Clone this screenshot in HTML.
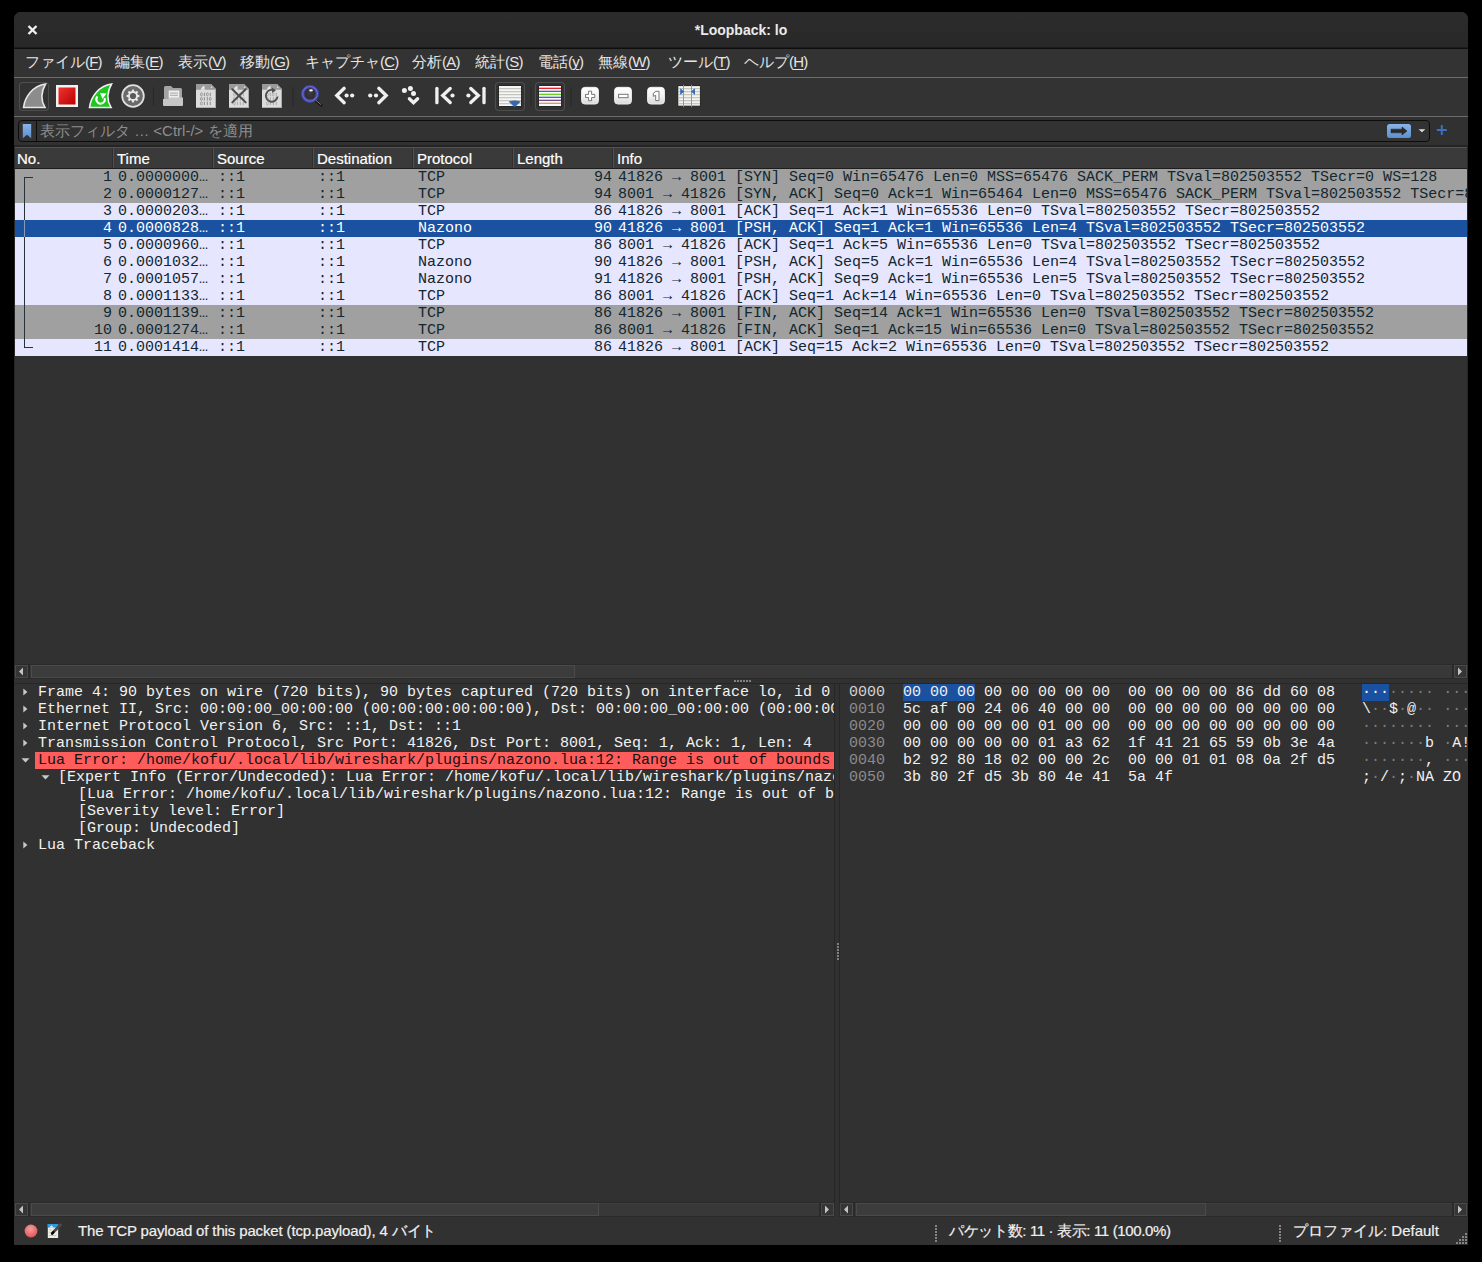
<!DOCTYPE html><html lang="ja"><head><meta charset="utf-8"><style>
*{box-sizing:border-box;margin:0;padding:0}
html,body{width:1482px;height:1262px;overflow:hidden;background:#000}
body{position:relative;font-family:"Liberation Sans",sans-serif;color:#eee}
.a{position:absolute}
.mono{font-family:"Liberation Mono",monospace;font-size:15px;white-space:pre}
.sans{font-family:"Liberation Sans",sans-serif;white-space:nowrap}
.stk{-webkit-text-stroke:0.2px currentColor}
#win{position:absolute;left:14px;top:12px;width:1454px;height:1233px;background:#313131;border-radius:7px 7px 0 0;overflow:hidden}
u{text-decoration:underline;text-underline-offset:2px;text-decoration-thickness:1px}
.row{position:absolute;left:15px;width:1452px;height:17px;line-height:17px;color:#12272e;overflow:hidden}
.row span{position:absolute;top:0}
.g{background:#a0a0a0}.l{background:#e7e6ff}.s{background:#1a51a0;color:#fff}
.dl{position:absolute;height:17px;line-height:17px;color:#f2f2f2;white-space:pre;font-family:"Liberation Mono",monospace;font-size:15px}
.hx{position:absolute;height:17px;line-height:17px;white-space:pre;font-family:"Liberation Mono",monospace;font-size:15px;color:#f0f0f0}
</style></head><body>
<div id="win"></div>
<div class="a" style="left:14px;top:12px;width:1454px;height:36px;background:linear-gradient(#2c2c2c,#282828);border-radius:7px 7px 0 0"></div>
<div class="a" style="left:14px;top:47px;width:1454px;height:1px;background:#1c1c1c"></div>
<div class="a" style="left:14px;top:48px;width:1454px;height:1px;background:#0e0e0e"></div>
<svg class="a" style="left:0;top:0" width="1482" height="1262" viewBox="0 0 1482 1262"><path d="M28.5 26 L36.5 34 M36.5 26 L28.5 34" stroke="#f0f0f0" stroke-width="2.4" stroke-linecap="butt"/></svg>
<div class="a sans" style="left:14px;width:1454px;top:22px;text-align:center;font-weight:bold;font-size:14px;color:#eaeaea;line-height:17px">*Loopback: lo</div>
<div class="a" style="left:14px;top:49px;width:1454px;height:28px;background:#333333"></div>
<div class="a sans" style="left:25px;top:52px;font-size:15px;line-height:20px;color:#e6e6e6">ファイル<span style="letter-spacing:-0.8px">(<u>F</u>)</span></div>
<div class="a sans" style="left:115px;top:52px;font-size:15px;line-height:20px;color:#e6e6e6">編集<span style="letter-spacing:-0.8px">(<u>E</u>)</span></div>
<div class="a sans" style="left:178px;top:52px;font-size:15px;line-height:20px;color:#e6e6e6">表示<span style="letter-spacing:-0.8px">(<u>V</u>)</span></div>
<div class="a sans" style="left:240px;top:52px;font-size:15px;line-height:20px;color:#e6e6e6">移動<span style="letter-spacing:-0.8px">(<u>G</u>)</span></div>
<div class="a sans" style="left:305px;top:52px;font-size:15px;line-height:20px;color:#e6e6e6">キャプチャ<span style="letter-spacing:-0.8px">(<u>C</u>)</span></div>
<div class="a sans" style="left:412px;top:52px;font-size:15px;line-height:20px;color:#e6e6e6">分析<span style="letter-spacing:-0.8px">(<u>A</u>)</span></div>
<div class="a sans" style="left:475px;top:52px;font-size:15px;line-height:20px;color:#e6e6e6">統計<span style="letter-spacing:-0.8px">(<u>S</u>)</span></div>
<div class="a sans" style="left:538px;top:52px;font-size:15px;line-height:20px;color:#e6e6e6">電話<span style="letter-spacing:-0.8px">(<u>y</u>)</span></div>
<div class="a sans" style="left:598px;top:52px;font-size:15px;line-height:20px;color:#e6e6e6">無線<span style="letter-spacing:-0.8px">(<u>W</u>)</span></div>
<div class="a sans" style="left:668px;top:52px;font-size:15px;line-height:20px;color:#e6e6e6">ツール<span style="letter-spacing:-0.8px">(<u>T</u>)</span></div>
<div class="a sans" style="left:744px;top:52px;font-size:15px;line-height:20px;color:#e6e6e6">ヘルプ<span style="letter-spacing:-0.8px">(<u>H</u>)</span></div>
<div class="a" style="left:14px;top:77px;width:1454px;height:1px;background:#6c6c6c"></div>
<div class="a" style="left:14px;top:78px;width:1454px;height:38px;background:#333333"></div>
<div class="a" style="left:14px;top:116px;width:1454px;height:1px;background:#6c6c6c"></div>
<svg class="a" style="left:0;top:0" width="1482" height="130" viewBox="0 0 1482 130">
<defs>
<linearGradient id="rg" x1="0" y1="0" x2="1" y2="1"><stop offset="0" stop-color="#e33"/><stop offset="1" stop-color="#b00"/></linearGradient>
<linearGradient id="wg" x1="0" y1="0" x2="0" y2="1"><stop offset="0" stop-color="#fff"/><stop offset="0.5" stop-color="#f4f4f4"/><stop offset="1" stop-color="#d8d8d8"/></linearGradient>
<linearGradient id="bg" x1="0" y1="0" x2="0" y2="1"><stop offset="0" stop-color="#8ab4e6"/><stop offset="1" stop-color="#5a8fd0"/></linearGradient>
</defs>
<!-- button frames -->
<rect x="19.5" y="82.5" width="29" height="28" rx="3.5" fill="#323232" stroke="#4e4e4e" stroke-width="1.1"/>
<rect x="495.5" y="82.5" width="29" height="28" rx="3.5" fill="#323232" stroke="#4e4e4e" stroke-width="1.1"/>
<rect x="535.5" y="82.5" width="29" height="28" rx="3.5" fill="#323232" stroke="#4e4e4e" stroke-width="1.1"/>
<!-- fin gray -->
<path d="M23.5 107.5 C25 96 33 86 45.5 84 C41 92 40.5 100 45 107.5 Z" fill="#8c8c8c" stroke="#e6e6e6" stroke-width="1.6" stroke-linejoin="miter"/>
<!-- red stop -->
<rect x="56" y="85" width="22" height="22" fill="#f2f2f2"/>
<rect x="58.5" y="87.5" width="17" height="17" fill="url(#rg)"/>
<!-- green fin -->
<path d="M89.5 107.5 C91 96 99 86 111.5 84 C107 92 106.5 100 111 107.5 Z" fill="#1ec81e" stroke="#f0f0f0" stroke-width="1.6"/>
<path d="M97.5 96.5 A4.2 4.2 0 1 0 104.5 98" fill="none" stroke="#fff" stroke-width="2"/>
<path d="M100 93 L106.5 93.5 L102.5 99 Z" fill="#fff"/>
<!-- gear -->
<circle cx="133" cy="96" r="10.8" fill="#6a6a6a" stroke="#e0e0e0" stroke-width="1.8"/>
<g fill="#e8e8e8">
<circle cx="133" cy="96" r="5"/>
<rect x="131.9" y="89.6" width="2.2" height="12.8"/>
<rect x="126.6" y="94.9" width="12.8" height="2.2"/>
<rect x="131.9" y="89.6" width="2.2" height="12.8" transform="rotate(45 133 96)"/>
<rect x="131.9" y="89.6" width="2.2" height="12.8" transform="rotate(-45 133 96)"/>
</g>
<circle cx="133" cy="96" r="3.1" fill="#5a5a5a"/>
<!-- separators -->
<rect x="153" y="87" width="1" height="19" fill="#282828"/>
<rect x="292.5" y="87" width="1" height="19" fill="#282828"/>
<rect x="530.5" y="87" width="1" height="19" fill="#282828"/>
<rect x="570.5" y="87" width="1" height="19" fill="#282828"/>
<!-- folder -->
<path d="M164 106 L164 87.5 Q164 86 165.5 86 L171 86 L173 88 L180.5 88 Q182 88 182 89.5 L182 106 Z" fill="#a4a4a4"/>
<rect x="168.7" y="90.5" width="10.6" height="8" fill="#eeeeee"/>
<rect x="170" y="92.6" width="8" height="1" fill="#a8a8a8"/><rect x="170" y="94.8" width="8" height="1" fill="#a8a8a8"/>
<path d="M163 99 L168 99 L170 97.5 L183 97.5 L183 105 Q183 106 182 106 L164 106 Q163 106 163 105 Z" fill="#c6c6c6"/>
<!-- file icons -->
<g>
<path d="M196 84 L211 84 L216 89.2 L216 108 L196 108 Z" fill="#dcdcdc"/>
<path d="M196 84 L211 84 L216 89.2 L216 89.8 L196 89.8 Z" fill="#9a9a9a"/>
<path d="M200.8 89.8 Q201.5 86 204.8 86 Q204 87.5 204.8 89.8 Z" fill="#e6e6e6"/>
<circle cx="211.6" cy="87.3" r="0.8" fill="#e8e8e8"/>
<rect x="215" y="89.5" width="1" height="18.5" fill="#ababab"/>
<rect x="196" y="107" width="20" height="1" fill="#b0b0b0"/>
</g>
<ellipse cx="201.40" cy="94.40" rx="0.95" ry="1.55" fill="none" stroke="#8c8c8c" stroke-width="0.85"/><rect x="203.85" y="92.70" width="1" height="3.4" fill="#8c8c8c"/><ellipse cx="207.30" cy="94.40" rx="0.95" ry="1.55" fill="none" stroke="#8c8c8c" stroke-width="0.85"/><rect x="209.75" y="92.70" width="1" height="3.4" fill="#8c8c8c"/><ellipse cx="201.40" cy="98.90" rx="0.95" ry="1.55" fill="none" stroke="#8c8c8c" stroke-width="0.85"/><rect x="203.85" y="97.20" width="1" height="3.4" fill="#8c8c8c"/><rect x="206.80" y="97.20" width="1" height="3.4" fill="#8c8c8c"/><ellipse cx="210.25" cy="98.90" rx="0.95" ry="1.55" fill="none" stroke="#8c8c8c" stroke-width="0.85"/><ellipse cx="201.40" cy="103.40" rx="0.95" ry="1.55" fill="none" stroke="#8c8c8c" stroke-width="0.85"/><rect x="203.85" y="101.70" width="1" height="3.4" fill="#8c8c8c"/><rect x="206.80" y="101.70" width="1" height="3.4" fill="#8c8c8c"/><rect x="209.75" y="101.70" width="1" height="3.4" fill="#8c8c8c"/>
<g transform="translate(33 0)">
<path d="M196 84 L211 84 L216 89.2 L216 108 L196 108 Z" fill="#dcdcdc"/>
<path d="M196 84 L211 84 L216 89.2 L216 89.8 L196 89.8 Z" fill="#9a9a9a"/>
<path d="M200.8 89.8 Q201.5 86 204.8 86 Q204 87.5 204.8 89.8 Z" fill="#e6e6e6"/>
<circle cx="211.6" cy="87.3" r="0.8" fill="#e8e8e8"/>
<rect x="215" y="89.5" width="1" height="18.5" fill="#ababab"/>
<rect x="196" y="107" width="20" height="1" fill="#b0b0b0"/>
</g>
<ellipse cx="234.40" cy="94.40" rx="0.95" ry="1.55" fill="none" stroke="#a8a8a8" stroke-width="0.85"/><rect x="236.85" y="92.70" width="1" height="3.4" fill="#a8a8a8"/><ellipse cx="240.30" cy="94.40" rx="0.95" ry="1.55" fill="none" stroke="#a8a8a8" stroke-width="0.85"/><rect x="242.75" y="92.70" width="1" height="3.4" fill="#a8a8a8"/><ellipse cx="234.40" cy="98.90" rx="0.95" ry="1.55" fill="none" stroke="#a8a8a8" stroke-width="0.85"/><rect x="236.85" y="97.20" width="1" height="3.4" fill="#a8a8a8"/><rect x="239.80" y="97.20" width="1" height="3.4" fill="#a8a8a8"/><ellipse cx="243.25" cy="98.90" rx="0.95" ry="1.55" fill="none" stroke="#a8a8a8" stroke-width="0.85"/><ellipse cx="234.40" cy="103.40" rx="0.95" ry="1.55" fill="none" stroke="#a8a8a8" stroke-width="0.85"/><rect x="236.85" y="101.70" width="1" height="3.4" fill="#a8a8a8"/><rect x="239.80" y="101.70" width="1" height="3.4" fill="#a8a8a8"/><rect x="242.75" y="101.70" width="1" height="3.4" fill="#a8a8a8"/>
<path d="M232.3 89.3 L245.7 102.4 M245.7 89.3 L232.3 102.4" stroke="#4a4a4a" stroke-width="2" stroke-linecap="round"/>
<g transform="translate(66 0)">
<path d="M196 84 L211 84 L216 89.2 L216 108 L196 108 Z" fill="#dcdcdc"/>
<path d="M196 84 L211 84 L216 89.2 L216 89.8 L196 89.8 Z" fill="#9a9a9a"/>
<path d="M200.8 89.8 Q201.5 86 204.8 86 Q204 87.5 204.8 89.8 Z" fill="#e6e6e6"/>
<circle cx="211.6" cy="87.3" r="0.8" fill="#e8e8e8"/>
<rect x="215" y="89.5" width="1" height="18.5" fill="#ababab"/>
<rect x="196" y="107" width="20" height="1" fill="#b0b0b0"/>
</g>
<ellipse cx="267.40" cy="94.40" rx="0.95" ry="1.55" fill="none" stroke="#a8a8a8" stroke-width="0.85"/><rect x="269.85" y="92.70" width="1" height="3.4" fill="#a8a8a8"/><ellipse cx="273.30" cy="94.40" rx="0.95" ry="1.55" fill="none" stroke="#a8a8a8" stroke-width="0.85"/><rect x="275.75" y="92.70" width="1" height="3.4" fill="#a8a8a8"/><ellipse cx="267.40" cy="98.90" rx="0.95" ry="1.55" fill="none" stroke="#a8a8a8" stroke-width="0.85"/><rect x="269.85" y="97.20" width="1" height="3.4" fill="#a8a8a8"/><rect x="272.80" y="97.20" width="1" height="3.4" fill="#a8a8a8"/><ellipse cx="276.25" cy="98.90" rx="0.95" ry="1.55" fill="none" stroke="#a8a8a8" stroke-width="0.85"/><ellipse cx="267.40" cy="103.40" rx="0.95" ry="1.55" fill="none" stroke="#a8a8a8" stroke-width="0.85"/><rect x="269.85" y="101.70" width="1" height="3.4" fill="#a8a8a8"/><rect x="272.80" y="101.70" width="1" height="3.4" fill="#a8a8a8"/><rect x="275.75" y="101.70" width="1" height="3.4" fill="#a8a8a8"/>
<path d="M274.6 90.6 A5.9 5.9 0 1 0 277.6 96.5" fill="none" stroke="#505050" stroke-width="1.9"/>
<path d="M271.8 87.6 L276 90.3 L272.2 93 Z" fill="#505050"/>
<!-- magnifier -->
<defs><radialGradient id="glass" cx="0.5" cy="0.45" r="0.6"><stop offset="0" stop-color="#3c3c3c"/><stop offset="0.7" stop-color="#2e2e2e"/><stop offset="1" stop-color="#4a4a4a"/></radialGradient></defs>
<path d="M315.6 100.2 L321.2 105.3" stroke="#161616" stroke-width="2.8" stroke-linecap="round"/>
<path d="M316.3 100.6 L320.8 104.4" stroke="#9a9888" stroke-width="0.9" stroke-linecap="round"/>
<circle cx="310" cy="93.8" r="6.4" fill="url(#glass)"/>
<circle cx="310" cy="93.8" r="7.2" fill="none" stroke="#6a62d0" stroke-width="2.8"/>
<circle cx="310" cy="93.8" r="8.5" fill="none" stroke="#2c44a8" stroke-width="0.9"/>
<circle cx="310" cy="93.8" r="6.2" fill="none" stroke="#1a2a60" stroke-width="0.5"/>
<ellipse cx="311" cy="90.4" rx="1.9" ry="1.1" fill="#f4f4f4"/>
<!-- arrows -->
<g stroke="#f0f0ee" stroke-width="3.3" stroke-linecap="round" stroke-linejoin="miter" fill="none">
<path d="M344.2 88.3 L336.8 95.5 L344.2 102.7"/>
<path d="M378.8 88.3 L386.2 95.5 L378.8 102.7"/>
<path d="M409.4 98.7 L413.5 102.6 L417.6 98.7"/>
<path d="M436.9 88.3 L436.9 102.7"/>
<path d="M450.2 88.5 L442.7 95.5 L450.2 102.5"/>
<path d="M470.8 88.5 L478.3 95.5 L470.8 102.5"/>
<path d="M484 88.3 L484 102.7"/>
</g>
<g fill="#f0f0f0">
<circle cx="346.6" cy="95.5" r="2.1"/><circle cx="352.2" cy="95.5" r="2.1"/>
<circle cx="370.2" cy="95.5" r="2.1"/><circle cx="376" cy="95.5" r="2.1"/>
<circle cx="404.4" cy="90.6" r="2.5"/><circle cx="410.4" cy="88.4" r="2.5"/><circle cx="413.5" cy="93.6" r="2.5"/>
<circle cx="452.5" cy="95.5" r="2.1"/><circle cx="468.4" cy="95.5" r="2.1"/>
</g>
<!-- autoscroll -->
<rect x="498.5" y="85.5" width="23" height="21" fill="#1e1e1e"/>
<rect x="499" y="86" width="22" height="20" fill="#f6f6f6"/>
<g fill="#b4b4a8">
<rect x="499" y="88.3" width="22" height="0.9"/><rect x="499" y="91.3" width="22" height="0.9"/><rect x="499" y="94.3" width="22" height="0.9"/>
<rect x="499" y="97.3" width="22" height="0.9"/><rect x="499" y="100.3" width="22" height="0.9"/><rect x="499" y="103.3" width="22" height="0.9"/>
</g>
<path d="M509 101.6 Q514.7 100 520.4 101.6 L514.7 107 Z" fill="#3568b0" stroke="#3568b0" stroke-width="0.6" stroke-linejoin="round"/>
<!-- colorize -->
<rect x="538.5" y="85.5" width="23" height="21" fill="#1e1e1e"/>
<rect x="539" y="86" width="22" height="20" fill="#f8f6ff"/>
<rect x="539" y="87.7" width="22" height="1.3" fill="#e82020"/>
<rect x="539" y="90.7" width="22" height="1.3" fill="#3a6ab8"/>
<rect x="539" y="93.7" width="22" height="1.3" fill="#6ad020"/>
<rect x="539" y="96.7" width="22" height="1.3" fill="#3a6ab8"/>
<rect x="539" y="99.7" width="22" height="1.3" fill="#7a4a90"/>
<rect x="539" y="102.7" width="22" height="1.3" fill="#d8a818"/>
<!-- zoom buttons -->
<rect x="581.5" y="87.3" width="17" height="16.8" rx="3.5" fill="url(#wg)" stroke="#fafafa" stroke-width="0.8"/>
<path d="M588.6 91.2 L591.6 91.2 L591.6 94.4 L594.8 94.4 L594.8 97.5 L591.6 97.5 L591.6 100.7 L588.6 100.7 L588.6 97.5 L585.5 97.5 L585.5 94.4 L588.6 94.4 Z" fill="#fff" stroke="#6a6a6a" stroke-width="0.9"/>
<rect x="614.5" y="87.3" width="17" height="16.8" rx="3.5" fill="url(#wg)" stroke="#fafafa" stroke-width="0.8"/>
<rect x="618.6" y="94.3" width="9.4" height="3.4" fill="#fff" stroke="#6a6a6a" stroke-width="0.9"/>
<rect x="647.5" y="87.3" width="17" height="16.8" rx="3.5" fill="url(#wg)" stroke="#fafafa" stroke-width="0.8"/>
<path d="M655.9 91.3 L659 91.3 L659 100.6 L655.7 100.6 L655.7 95.4 L653.3 96.3 L653.3 93.3 Z" fill="#fff" stroke="#6a6a6a" stroke-width="0.9" stroke-linejoin="round"/>
<!-- resize columns -->
<rect x="677.8" y="85.6" width="22.4" height="20.5" fill="#1e1e1e"/>
<rect x="678.3" y="86.1" width="21.6" height="19.6" fill="#f4f4f4"/>
<g fill="#b4b4a8">
<rect x="678.3" y="88.3" width="21.6" height="0.9"/><rect x="678.3" y="91.3" width="21.6" height="0.9"/><rect x="678.3" y="94.3" width="21.6" height="0.9"/>
<rect x="678.3" y="97.3" width="21.6" height="0.9"/><rect x="678.3" y="100.3" width="21.6" height="0.9"/><rect x="678.3" y="103.3" width="21.6" height="0.9"/>
</g>
<rect x="683.1" y="84.8" width="0.9" height="22.4" fill="#909090"/>
<rect x="691.1" y="84.8" width="0.9" height="22.4" fill="#909090"/>
<path d="M680.2 88.3 L684.2 91.6 L680.2 95 Z" fill="#3a6ab8"/>
<path d="M695 88.3 L691 91.6 L695 95 Z" fill="#3a6ab8"/>
</svg>

<div class="a" style="left:14px;top:117px;width:1454px;height:30px;background:#313131"></div>
<div class="a" style="left:18px;top:120px;width:1412px;height:22px;border:1.5px solid #0c0c0c;border-radius:4px;background:#323232"></div>
<div class="a" style="left:36px;top:121px;width:1px;height:20px;background:#0c0c0c"></div>
<div class="a sans" style="left:40px;top:121px;font-size:15px;line-height:20px;color:#8e8e8e">表示フィルタ … &lt;Ctrl-/&gt; を適用</div>
<svg class="a" style="left:0;top:110px" width="1482" height="40" viewBox="0 110 1482 40">
<defs><linearGradient id="bkg" x1="0" y1="0" x2="0" y2="1"><stop offset="0" stop-color="#8ab4e6"/><stop offset="1" stop-color="#5a90d0"/></linearGradient></defs>
<path d="M22.8 124 L31.2 124 L31.2 138.2 L27 134.8 L22.8 138.2 Z" fill="url(#bkg)"/>
<rect x="1387" y="124" width="24" height="14" rx="2.5" fill="url(#bkg)"/>
<path d="M1391 129.2 L1402 129.2 L1402 127 L1407 131 L1402 135 L1402 132.8 L1391 132.8 Z" fill="#2a2a2a" stroke="#2a2a2a" stroke-width="0.6" stroke-linejoin="round"/>
<path d="M1418.6 129.3 L1425.3 129.3 L1422 132.3 Z" fill="#e0e0e0"/>
<path d="M1441.8 125 L1441.8 135 M1436.8 130 L1446.8 130" stroke="#3a70c4" stroke-width="2"/>
</svg>

<div class="a" style="left:14px;top:145px;width:1454px;height:2px;background:#242424"></div>
<div class="a" style="left:14px;top:147px;width:1454px;height:518px;background:#313131;border-left:1px solid #262626;border-right:1px solid #262626;border-bottom:1px solid #262626"></div>
<div class="a" style="left:15px;top:147px;width:1452px;height:22px;background:#3a3a3a;border-top:1px solid #525252;border-bottom:1px solid #1e1e1e"></div>
<div class="a" style="left:112px;top:148px;width:1px;height:20px;background:#2e2e2e"></div><div class="a" style="left:113px;top:148px;width:1px;height:20px;background:#505050"></div>
<div class="a" style="left:212px;top:148px;width:1px;height:20px;background:#2e2e2e"></div><div class="a" style="left:213px;top:148px;width:1px;height:20px;background:#505050"></div>
<div class="a" style="left:312px;top:148px;width:1px;height:20px;background:#2e2e2e"></div><div class="a" style="left:313px;top:148px;width:1px;height:20px;background:#505050"></div>
<div class="a" style="left:412px;top:148px;width:1px;height:20px;background:#2e2e2e"></div><div class="a" style="left:413px;top:148px;width:1px;height:20px;background:#505050"></div>
<div class="a" style="left:512px;top:148px;width:1px;height:20px;background:#2e2e2e"></div><div class="a" style="left:513px;top:148px;width:1px;height:20px;background:#505050"></div>
<div class="a" style="left:612px;top:148px;width:1px;height:20px;background:#2e2e2e"></div><div class="a" style="left:613px;top:148px;width:1px;height:20px;background:#505050"></div>
<div class="a sans stk" style="left:17px;top:150px;font-size:15px;line-height:18px;color:#ffffff">No.</div>
<div class="a sans stk" style="left:117px;top:150px;font-size:15px;line-height:18px;color:#ffffff">Time</div>
<div class="a sans stk" style="left:217px;top:150px;font-size:15px;line-height:18px;color:#ffffff">Source</div>
<div class="a sans stk" style="left:317px;top:150px;font-size:15px;line-height:18px;color:#ffffff">Destination</div>
<div class="a sans stk" style="left:417px;top:150px;font-size:15px;line-height:18px;color:#ffffff">Protocol</div>
<div class="a sans stk" style="left:517px;top:150px;font-size:15px;line-height:18px;color:#ffffff">Length</div>
<div class="a sans stk" style="left:617px;top:150px;font-size:15px;line-height:18px;color:#ffffff">Info</div>
<div class="row mono g" style="top:169px">
<span style="right:1355px">1</span>
<span style="left:103px">0.0000000…</span>
<span style="left:203px">::1</span>
<span style="left:303px">::1</span>
<span style="left:403px">TCP</span>
<span style="right:855px">94</span>
<span style="left:603px">41826 → 8001 [SYN] Seq=0 Win=65476 Len=0 MSS=65476 SACK_PERM TSval=802503552 TSecr=0 WS=128</span>
</div>
<div class="row mono g" style="top:186px">
<span style="right:1355px">2</span>
<span style="left:103px">0.0000127…</span>
<span style="left:203px">::1</span>
<span style="left:303px">::1</span>
<span style="left:403px">TCP</span>
<span style="right:855px">94</span>
<span style="left:603px">8001 → 41826 [SYN, ACK] Seq=0 Ack=1 Win=65464 Len=0 MSS=65476 SACK_PERM TSval=802503552 TSecr=802503552 WS=128</span>
</div>
<div class="row mono l" style="top:203px">
<span style="right:1355px">3</span>
<span style="left:103px">0.0000203…</span>
<span style="left:203px">::1</span>
<span style="left:303px">::1</span>
<span style="left:403px">TCP</span>
<span style="right:855px">86</span>
<span style="left:603px">41826 → 8001 [ACK] Seq=1 Ack=1 Win=65536 Len=0 TSval=802503552 TSecr=802503552</span>
</div>
<div class="row mono s" style="top:220px">
<span style="right:1355px">4</span>
<span style="left:103px">0.0000828…</span>
<span style="left:203px">::1</span>
<span style="left:303px">::1</span>
<span style="left:403px">Nazono</span>
<span style="right:855px">90</span>
<span style="left:603px">41826 → 8001 [PSH, ACK] Seq=1 Ack=1 Win=65536 Len=4 TSval=802503552 TSecr=802503552</span>
</div>
<div class="row mono l" style="top:237px">
<span style="right:1355px">5</span>
<span style="left:103px">0.0000960…</span>
<span style="left:203px">::1</span>
<span style="left:303px">::1</span>
<span style="left:403px">TCP</span>
<span style="right:855px">86</span>
<span style="left:603px">8001 → 41826 [ACK] Seq=1 Ack=5 Win=65536 Len=0 TSval=802503552 TSecr=802503552</span>
</div>
<div class="row mono l" style="top:254px">
<span style="right:1355px">6</span>
<span style="left:103px">0.0001032…</span>
<span style="left:203px">::1</span>
<span style="left:303px">::1</span>
<span style="left:403px">Nazono</span>
<span style="right:855px">90</span>
<span style="left:603px">41826 → 8001 [PSH, ACK] Seq=5 Ack=1 Win=65536 Len=4 TSval=802503552 TSecr=802503552</span>
</div>
<div class="row mono l" style="top:271px">
<span style="right:1355px">7</span>
<span style="left:103px">0.0001057…</span>
<span style="left:203px">::1</span>
<span style="left:303px">::1</span>
<span style="left:403px">Nazono</span>
<span style="right:855px">91</span>
<span style="left:603px">41826 → 8001 [PSH, ACK] Seq=9 Ack=1 Win=65536 Len=5 TSval=802503552 TSecr=802503552</span>
</div>
<div class="row mono l" style="top:288px">
<span style="right:1355px">8</span>
<span style="left:103px">0.0001133…</span>
<span style="left:203px">::1</span>
<span style="left:303px">::1</span>
<span style="left:403px">TCP</span>
<span style="right:855px">86</span>
<span style="left:603px">8001 → 41826 [ACK] Seq=1 Ack=14 Win=65536 Len=0 TSval=802503552 TSecr=802503552</span>
</div>
<div class="row mono g" style="top:305px">
<span style="right:1355px">9</span>
<span style="left:103px">0.0001139…</span>
<span style="left:203px">::1</span>
<span style="left:303px">::1</span>
<span style="left:403px">TCP</span>
<span style="right:855px">86</span>
<span style="left:603px">41826 → 8001 [FIN, ACK] Seq=14 Ack=1 Win=65536 Len=0 TSval=802503552 TSecr=802503552</span>
</div>
<div class="row mono g" style="top:322px">
<span style="right:1355px">10</span>
<span style="left:103px">0.0001274…</span>
<span style="left:203px">::1</span>
<span style="left:303px">::1</span>
<span style="left:403px">TCP</span>
<span style="right:855px">86</span>
<span style="left:603px">8001 → 41826 [FIN, ACK] Seq=1 Ack=15 Win=65536 Len=0 TSval=802503552 TSecr=802503552</span>
</div>
<div class="row mono l" style="top:339px">
<span style="right:1355px">11</span>
<span style="left:103px">0.0001414…</span>
<span style="left:203px">::1</span>
<span style="left:303px">::1</span>
<span style="left:403px">TCP</span>
<span style="right:855px">86</span>
<span style="left:603px">41826 → 8001 [ACK] Seq=15 Ack=2 Win=65536 Len=0 TSval=802503552 TSecr=802503552</span>
</div>
<div class="a" style="left:24px;top:177px;width:9px;height:171px;border:1.2px solid #25343a;border-right:none"></div>
<div class="a" style="left:24px;top:220px;width:1px;height:17px;background:#8a9ab0"></div>
<div class="a" style="left:14px;top:664px;width:1454px;height:15px;background:#2a2a2a"></div>
<div class="a" style="left:30px;top:665px;width:1422px;height:13px;background:#383838;border-top:1px solid #3e3e3e"></div>
<div class="a" style="left:15px;top:665px;width:13px;height:13px;background:#353535;border:1px solid #4a4a4a"></div>
<div class="a" style="left:1454px;top:665px;width:13px;height:13px;background:#353535;border:1px solid #4a4a4a"></div>
<div class="a" style="left:31px;top:665px;width:544px;height:13px;background:#3c3c3c;border:1px solid #4a4a4a"></div>
<svg class="a" style="left:14px;top:665px" width="1454" height="13"><path d="M5 6.5 L9 2.5 L9 10.5 Z" fill="#c4c4c4"/><path d="M1444 2.5 L1448 6.5 L1444 10.5 Z" fill="#c4c4c4"/></svg>
<div class="a" style="left:14px;top:679px;width:1454px;height:4px;background:#313131"></div>
<div class="a" style="left:14px;top:683px;width:1454px;height:1px;background:#262626"></div>
<svg class="a" style="left:733px;top:679px" width="20" height="4"><rect x="1" y="1" width="2" height="2" fill="#808080"/><rect x="4" y="1" width="2" height="2" fill="#808080"/><rect x="7" y="1" width="2" height="2" fill="#808080"/><rect x="10" y="1" width="2" height="2" fill="#808080"/><rect x="13" y="1" width="2" height="2" fill="#808080"/><rect x="16" y="1" width="2" height="2" fill="#808080"/></svg>
<div class="a" style="left:14px;top:684px;width:820px;height:518px;background:#313131;overflow:hidden">
<div class="dl" style="left:24px;top:0px;color:#f2f2f2">Frame 4: 90 bytes on wire (720 bits), 90 bytes captured (720 bits) on interface lo, id 0</div>
<svg class="a" style="left:6.7px;top:0px" width="10" height="17"><path d="M2.3 4.6 L6.4 8.1 L2.3 11.6 Z" fill="#c8c8c8"/></svg>
<div class="dl" style="left:24px;top:17px;color:#f2f2f2">Ethernet II, Src: 00:00:00_00:00:00 (00:00:00:00:00:00), Dst: 00:00:00_00:00:00 (00:00:00:00:00:00)</div>
<svg class="a" style="left:6.7px;top:17px" width="10" height="17"><path d="M2.3 4.6 L6.4 8.1 L2.3 11.6 Z" fill="#c8c8c8"/></svg>
<div class="dl" style="left:24px;top:34px;color:#f2f2f2">Internet Protocol Version 6, Src: ::1, Dst: ::1</div>
<svg class="a" style="left:6.7px;top:34px" width="10" height="17"><path d="M2.3 4.6 L6.4 8.1 L2.3 11.6 Z" fill="#c8c8c8"/></svg>
<div class="dl" style="left:24px;top:51px;color:#f2f2f2">Transmission Control Protocol, Src Port: 41826, Dst Port: 8001, Seq: 1, Ack: 1, Len: 4</div>
<svg class="a" style="left:6.7px;top:51px" width="10" height="17"><path d="M2.3 4.6 L6.4 8.1 L2.3 11.6 Z" fill="#c8c8c8"/></svg>
<div class="a" style="left:21px;top:68px;width:799px;height:17px;background:#ff5c5c"></div>
<div class="dl" style="left:24px;top:68px;color:#111">Lua Error: /home/kofu/.local/lib/wireshark/plugins/nazono.lua:12: Range is out of bounds</div>
<svg class="a" style="left:6.7px;top:68px" width="12" height="17"><path d="M0.5 6.2 L8.5 6.2 L4.5 10.6 Z" fill="#c8c8c8"/></svg>
<div class="dl" style="left:44px;top:85px;color:#f2f2f2">[Expert Info (Error/Undecoded): Lua Error: /home/kofu/.local/lib/wireshark/plugins/nazono.lua:12: Range is out of bounds]</div>
<svg class="a" style="left:26.7px;top:85px" width="12" height="17"><path d="M0.5 6.2 L8.5 6.2 L4.5 10.6 Z" fill="#c8c8c8"/></svg>
<div class="dl" style="left:64px;top:102px;color:#f2f2f2">[Lua Error: /home/kofu/.local/lib/wireshark/plugins/nazono.lua:12: Range is out of bounds]</div>
<div class="dl" style="left:64px;top:119px;color:#f2f2f2">[Severity level: Error]</div>
<div class="dl" style="left:64px;top:136px;color:#f2f2f2">[Group: Undecoded]</div>
<div class="dl" style="left:24px;top:153px;color:#f2f2f2">Lua Traceback</div>
<svg class="a" style="left:6.7px;top:153px" width="10" height="17"><path d="M2.3 4.6 L6.4 8.1 L2.3 11.6 Z" fill="#c8c8c8"/></svg>
</div>
<div class="a" style="left:834px;top:684px;width:1px;height:519px;background:#262626"></div>
<div class="a" style="left:835px;top:684px;width:4px;height:533px;background:#313131"></div>
<div class="a" style="left:839px;top:684px;width:1px;height:519px;background:#262626"></div>
<svg class="a" style="left:835px;top:942px" width="4" height="20"><rect x="2" y="1" width="2" height="2" fill="#808080"/><rect x="2" y="4" width="2" height="2" fill="#808080"/><rect x="2" y="7" width="2" height="2" fill="#808080"/><rect x="2" y="10" width="2" height="2" fill="#808080"/><rect x="2" y="13" width="2" height="2" fill="#808080"/><rect x="2" y="16" width="2" height="2" fill="#808080"/></svg>
<div class="a" style="left:840px;top:684px;width:627px;height:518px;background:#313131;overflow:hidden">
<div class="hx" style="left:9px;top:0px;color:#d4d4d4">0000</div>
<div class="a" style="left:63px;top:0px;width:72px;height:17px;background:#1a51a0"></div>
<div class="hx" style="left:63px;top:0px">00 00 00 00 00 00 00 00  00 00 00 00 86 dd 60 08</div>
<div class="a" style="left:522px;top:0px;width:27px;height:17px;background:#1a51a0"></div>
<div class="hx" style="left:522px;top:0px"><b style="color:#fff;font-weight:normal">·</b><b style="color:#fff;font-weight:normal">·</b><b style="color:#fff;font-weight:normal">·</b><b style="color:#7c7c7c;font-weight:normal">·</b><b style="color:#7c7c7c;font-weight:normal">·</b><b style="color:#7c7c7c;font-weight:normal">·</b><b style="color:#7c7c7c;font-weight:normal">·</b><b style="color:#7c7c7c;font-weight:normal">·</b> <b style="color:#7c7c7c;font-weight:normal">·</b><b style="color:#7c7c7c;font-weight:normal">·</b><b style="color:#7c7c7c;font-weight:normal">·</b><b style="color:#7c7c7c;font-weight:normal">·</b><b style="color:#7c7c7c;font-weight:normal">·</b><b style="color:#7c7c7c;font-weight:normal">·</b>`<b style="color:#7c7c7c;font-weight:normal">·</b></div>
<div class="hx" style="left:9px;top:17px;color:#8c8c8c">0010</div>
<div class="hx" style="left:63px;top:17px">5c af 00 24 06 40 00 00  00 00 00 00 00 00 00 00</div>
<div class="hx" style="left:522px;top:17px">\<b style="color:#7c7c7c;font-weight:normal">·</b><b style="color:#7c7c7c;font-weight:normal">·</b>$<b style="color:#7c7c7c;font-weight:normal">·</b>@<b style="color:#7c7c7c;font-weight:normal">·</b><b style="color:#7c7c7c;font-weight:normal">·</b> <b style="color:#7c7c7c;font-weight:normal">·</b><b style="color:#7c7c7c;font-weight:normal">·</b><b style="color:#7c7c7c;font-weight:normal">·</b><b style="color:#7c7c7c;font-weight:normal">·</b><b style="color:#7c7c7c;font-weight:normal">·</b><b style="color:#7c7c7c;font-weight:normal">·</b><b style="color:#7c7c7c;font-weight:normal">·</b><b style="color:#7c7c7c;font-weight:normal">·</b></div>
<div class="hx" style="left:9px;top:34px;color:#8c8c8c">0020</div>
<div class="hx" style="left:63px;top:34px">00 00 00 00 00 01 00 00  00 00 00 00 00 00 00 00</div>
<div class="hx" style="left:522px;top:34px"><b style="color:#7c7c7c;font-weight:normal">·</b><b style="color:#7c7c7c;font-weight:normal">·</b><b style="color:#7c7c7c;font-weight:normal">·</b><b style="color:#7c7c7c;font-weight:normal">·</b><b style="color:#7c7c7c;font-weight:normal">·</b><b style="color:#7c7c7c;font-weight:normal">·</b><b style="color:#7c7c7c;font-weight:normal">·</b><b style="color:#7c7c7c;font-weight:normal">·</b> <b style="color:#7c7c7c;font-weight:normal">·</b><b style="color:#7c7c7c;font-weight:normal">·</b><b style="color:#7c7c7c;font-weight:normal">·</b><b style="color:#7c7c7c;font-weight:normal">·</b><b style="color:#7c7c7c;font-weight:normal">·</b><b style="color:#7c7c7c;font-weight:normal">·</b><b style="color:#7c7c7c;font-weight:normal">·</b><b style="color:#7c7c7c;font-weight:normal">·</b></div>
<div class="hx" style="left:9px;top:51px;color:#8c8c8c">0030</div>
<div class="hx" style="left:63px;top:51px">00 00 00 00 00 01 a3 62  1f 41 21 65 59 0b 3e 4a</div>
<div class="hx" style="left:522px;top:51px"><b style="color:#7c7c7c;font-weight:normal">·</b><b style="color:#7c7c7c;font-weight:normal">·</b><b style="color:#7c7c7c;font-weight:normal">·</b><b style="color:#7c7c7c;font-weight:normal">·</b><b style="color:#7c7c7c;font-weight:normal">·</b><b style="color:#7c7c7c;font-weight:normal">·</b><b style="color:#7c7c7c;font-weight:normal">·</b>b <b style="color:#7c7c7c;font-weight:normal">·</b>A!eY<b style="color:#7c7c7c;font-weight:normal">·</b>&gt;J</div>
<div class="hx" style="left:9px;top:68px;color:#8c8c8c">0040</div>
<div class="hx" style="left:63px;top:68px">b2 92 80 18 02 00 00 2c  00 00 01 01 08 0a 2f d5</div>
<div class="hx" style="left:522px;top:68px"><b style="color:#7c7c7c;font-weight:normal">·</b><b style="color:#7c7c7c;font-weight:normal">·</b><b style="color:#7c7c7c;font-weight:normal">·</b><b style="color:#7c7c7c;font-weight:normal">·</b><b style="color:#7c7c7c;font-weight:normal">·</b><b style="color:#7c7c7c;font-weight:normal">·</b><b style="color:#7c7c7c;font-weight:normal">·</b>, <b style="color:#7c7c7c;font-weight:normal">·</b><b style="color:#7c7c7c;font-weight:normal">·</b><b style="color:#7c7c7c;font-weight:normal">·</b><b style="color:#7c7c7c;font-weight:normal">·</b><b style="color:#7c7c7c;font-weight:normal">·</b><b style="color:#7c7c7c;font-weight:normal">·</b>/<b style="color:#7c7c7c;font-weight:normal">·</b></div>
<div class="hx" style="left:9px;top:85px;color:#8c8c8c">0050</div>
<div class="hx" style="left:63px;top:85px">3b 80 2f d5 3b 80 4e 41  5a 4f</div>
<div class="hx" style="left:522px;top:85px">;<b style="color:#7c7c7c;font-weight:normal">·</b>/<b style="color:#7c7c7c;font-weight:normal">·</b>;<b style="color:#7c7c7c;font-weight:normal">·</b>NA ZO</div>
</div>
<div class="a" style="left:14px;top:1202px;width:821px;height:15px;background:#2a2a2a"></div>
<div class="a" style="left:30px;top:1203px;width:789px;height:13px;background:#383838;border-top:1px solid #3e3e3e"></div>
<div class="a" style="left:15px;top:1203px;width:13px;height:13px;background:#353535;border:1px solid #4a4a4a"></div>
<div class="a" style="left:821px;top:1203px;width:13px;height:13px;background:#353535;border:1px solid #4a4a4a"></div>
<div class="a" style="left:31px;top:1203px;width:568px;height:13px;background:#3c3c3c;border:1px solid #4a4a4a"></div>
<svg class="a" style="left:14px;top:1203px" width="821" height="13"><path d="M5 6.5 L9 2.5 L9 10.5 Z" fill="#c4c4c4"/><path d="M811 2.5 L815 6.5 L811 10.5 Z" fill="#c4c4c4"/></svg>
<div class="a" style="left:839px;top:1202px;width:629px;height:15px;background:#2a2a2a"></div>
<div class="a" style="left:855px;top:1203px;width:597px;height:13px;background:#383838;border-top:1px solid #3e3e3e"></div>
<div class="a" style="left:840px;top:1203px;width:13px;height:13px;background:#353535;border:1px solid #4a4a4a"></div>
<div class="a" style="left:1454px;top:1203px;width:13px;height:13px;background:#353535;border:1px solid #4a4a4a"></div>
<div class="a" style="left:856px;top:1203px;width:350px;height:13px;background:#3c3c3c;border:1px solid #4a4a4a"></div>
<svg class="a" style="left:839px;top:1203px" width="629" height="13"><path d="M5 6.5 L9 2.5 L9 10.5 Z" fill="#c4c4c4"/><path d="M619 2.5 L623 6.5 L619 10.5 Z" fill="#c4c4c4"/></svg>
<div class="a" style="left:14px;top:1217px;width:1454px;height:28px;background:#313131"></div>
<svg class="a" style="left:0;top:1210px" width="1482" height="40" viewBox="0 1210 1482 40">
<defs><radialGradient id="rdot" cx="0.45" cy="0.35" r="0.7"><stop offset="0" stop-color="#f0a0a0"/><stop offset="1" stop-color="#e05050"/></radialGradient></defs>
<circle cx="31" cy="1231" r="6.4" fill="url(#rdot)"/>
<rect x="47.8" y="1224" width="10.3" height="14" fill="#ecebe4"/>
<rect x="47.8" y="1224" width="10.3" height="3.6" fill="#2a9ae0"/>
<path d="M49.5 1227.6 Q51 1225 52 1225.5 Q52.5 1227 54 1227.6 Z" fill="#f4f4f4"/>
<g fill="#b8b8b0"><rect x="49.3" y="1229.5" width="2" height="0.8"/><rect x="49.3" y="1232" width="2" height="0.8"/><rect x="49.3" y="1235" width="7" height="0.8"/></g>
<path d="M52.3 1233.2 L60.5 1224.8" stroke="#4a4a4a" stroke-width="2.8" stroke-linecap="round"/>
<path d="M52 1233.7 L53.3 1232.2" stroke="#000" stroke-width="2.2" stroke-linecap="round"/>
<g><rect x="935" y="1225" width="2" height="2" fill="#858585"/><rect x="1279" y="1225" width="2" height="2" fill="#858585"/><rect x="935" y="1228" width="2" height="2" fill="#858585"/><rect x="1279" y="1228" width="2" height="2" fill="#858585"/><rect x="935" y="1231" width="2" height="2" fill="#858585"/><rect x="1279" y="1231" width="2" height="2" fill="#858585"/><rect x="935" y="1234" width="2" height="2" fill="#858585"/><rect x="1279" y="1234" width="2" height="2" fill="#858585"/><rect x="935" y="1237" width="2" height="2" fill="#858585"/><rect x="1279" y="1237" width="2" height="2" fill="#858585"/><rect x="935" y="1240" width="2" height="2" fill="#858585"/><rect x="1279" y="1240" width="2" height="2" fill="#858585"/></g>
<g fill="#858585"><rect x="1465" y="1233" width="2" height="2"/><rect x="1462" y="1236" width="2" height="2"/><rect x="1465" y="1236" width="2" height="2"/><rect x="1459" y="1239" width="2" height="2"/><rect x="1462" y="1239" width="2" height="2"/><rect x="1465" y="1239" width="2" height="2"/><rect x="1456" y="1242" width="2" height="2"/><rect x="1459" y="1242" width="2" height="2"/><rect x="1462" y="1242" width="2" height="2"/><rect x="1465" y="1242" width="2" height="2"/></g>
</svg>

<div class="a sans stk" style="left:78px;top:1222px;font-size:15px;line-height:18px;color:#f0f0f0;letter-spacing:-0.14px">The TCP payload of this packet (tcp.payload), 4 バイト</div>
<div class="a sans stk" style="left:949px;top:1222px;font-size:15px;line-height:18px;color:#f0f0f0;letter-spacing:-0.35px">パケット数: 11 · 表示: 11 (100.0%)</div>
<div class="a sans stk" style="left:1293px;top:1222px;font-size:15px;line-height:18px;color:#f0f0f0">プロファイル: Default</div>
</body></html>
